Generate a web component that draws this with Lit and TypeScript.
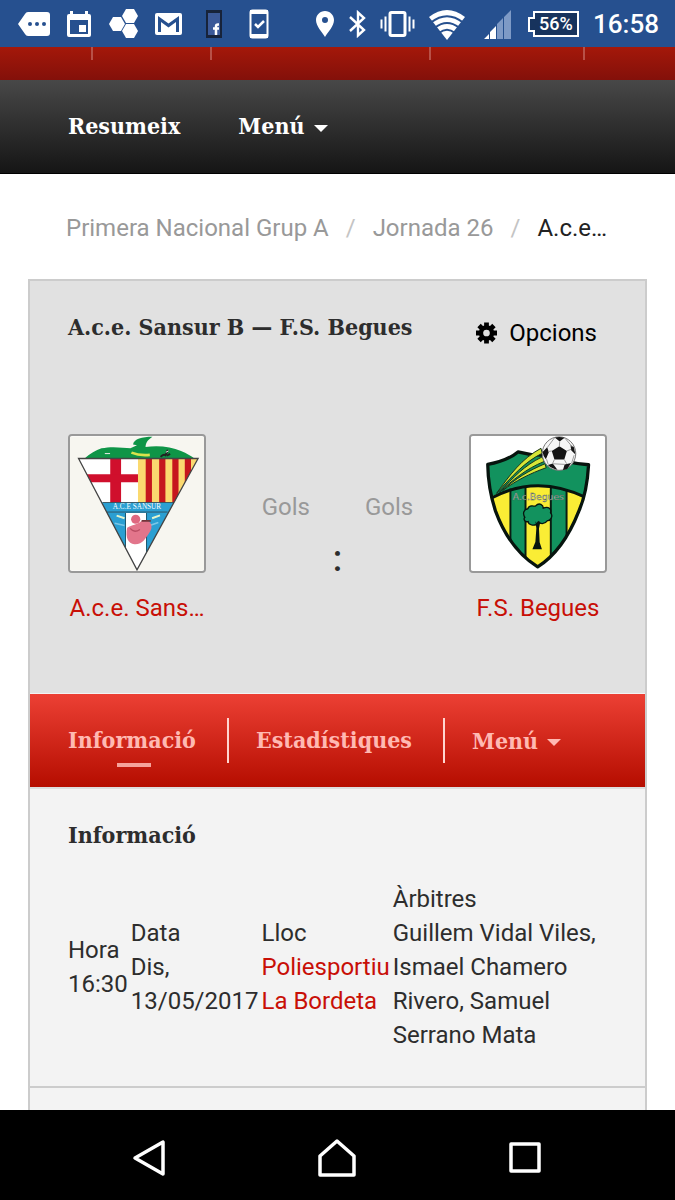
import { LitElement, html, css } from 'lit';
import { customElement, property } from 'lit/decorators.js';

const icons = {
  more: html`<svg width="32" height="26" viewBox="0 0 32 26">
    <path fill="#fff" d="M10 1h19q3 0 3 3v18q0 3-3 3H10q-2 0-3-2L0 13 7 3q1-2 3-2Z" />
    <g fill="#26508f"><circle cx="12" cy="13" r="2" /><circle cx="19" cy="13" r="2" /><circle cx="26" cy="13" r="2" /></g>
  </svg>`,
  calendar: html`<svg width="26" height="28" viewBox="0 0 26 28">
    <path fill="#fff" fill-rule="evenodd" d="M4 1h3v3h12V1h3v3h1q2 0 2 2v19q0 2-2 2H3q-2 0-2-2V6q0-2 2-2h1ZM4 10v14h18V10ZM13 15h7v7h-7Z" />
  </svg>`,
  hexagons: html`<svg width="30" height="30" viewBox="0 0 30 30">
    <g fill="#fff">
      <path d="M4 8h8l4 7-4 7H4l-4-7Z" />
      <path d="M17 0h8l4 7-4 7h-8l-4-7Z" />
      <path d="M17 15h8l4 7-4 7h-8l-4-7Z" />
    </g>
  </svg>`,
  mail: html`<svg width="27" height="22" viewBox="0 0 27 22">
    <rect width="27" height="22" rx="2" fill="#fff" />
    <path fill="#26508f" d="M3 19V3l10.500 7.500L24 3v16h-3V9l-7.500 5.500L6 9v10Z" />
  </svg>`,
  facebook: html`<svg width="16" height="28" viewBox="0 0 16 28">
    <rect width="16" height="28" fill="#17233a" />
    <rect x="2" y="3" width="12" height="22" fill="#3b5998" />
    <path fill="none" stroke="#fff" stroke-width="2.500" d="M13 14.500h-1q-2 0-2 2V25M7 18.500h6" />
  </svg>`,
  phoneCheck: html`<svg width="20" height="32" viewBox="0 0 20 32">
    <rect x="1.500" y="2.500" width="17" height="27" rx="2" fill="none" stroke="#fff" stroke-width="2" />
    <path fill="#fff" d="M1 2h18v4H1ZM1 26h18v4H1Z" />
    <path fill="none" stroke="#fff" stroke-width="2.500" d="m6 16 3 3 6-6" />
  </svg>`,
  location: html`<svg width="20" height="28" viewBox="0 0 20 28">
    <path fill="#fff" fill-rule="evenodd" d="M10 1c5 0 9 4 9 9 0 6-6 12-9 17C7 22 1 16 1 10c0-5 4-9 9-9Zm0 6a3 3 0 1 0 0 6 3 3 0 0 0 0-6Z" />
  </svg>`,
  bluetooth: html`<svg width="17" height="28" viewBox="0 0 17 28">
    <path fill="none" stroke="#fff" stroke-width="2.400" d="m1 7 14 13-6 5.500v-23l6 5.500L1 21" />
  </svg>`,
  vibrate: html`<svg width="35" height="28" viewBox="0 0 35 28">
    <rect x="10" y="2.500" width="15" height="23" rx="1.500" fill="none" stroke="#fff" stroke-width="3" />
    <path stroke="#fff" stroke-width="2" d="M1.500 9.500v9M5.500 6.500v15M29.500 6.500v15M33.500 9.500v9" />
  </svg>`,
  wifi: html`<svg width="40" height="32" viewBox="0 0 40 32">
    <path fill="#fff" d="M0 9Q18 -5 36 9L18 32Z" />
    <g fill="none" stroke="#26508f" stroke-width="2">
      <path d="M2 14.500Q18 2 34 14.500" />
      <path d="M6 19.500Q18 10.500 30 19.500" />
      <path d="M10 25Q18 18.500 26 25" />
    </g>
  </svg>`,
  signal: html`<svg width="31" height="32" viewBox="0 0 31 32">
    <path fill="#fff" d="m1 31 5-5v5ZM7 31v-7l6-6v13Z" />
    <path fill="#7e9ac6" d="M14 31V16l6-6v21ZM21 31V9l7-7v29Z" />
  </svg>`,
  battery: html`<svg width="51" height="28" viewBox="0 0 51 28">
    <path fill="#17335d" stroke="#fff" stroke-width="2" d="M6 2h44v24H6v-5H1V8h5Z" />
    <text x="11" y="20" fill="#fff" font-family="Roboto, sans-serif" font-size="18" font-weight="500">56%</text>
  </svg>`,
  gear: html`<svg width="21" height="22" viewBox="0 0 22 22">
    <g stroke="#000" stroke-width="5">
      <path d="M11 0v22M0 11h22M3.200 3.200l15.600 15.600M18.800 3.200 3.200 18.800" />
    </g>
    <circle cx="11" cy="11" r="8" />
    <circle cx="11" cy="11" r="3.500" fill="#e1e1e1" />
  </svg>`,
  back: html`<svg width="36" height="40" viewBox="0 0 36 40">
    <path fill="none" stroke="#fff" stroke-width="3.500" stroke-linejoin="round" d="M31 4v32L3 20Z" />
  </svg>`,
  home: html`<svg width="40" height="40" viewBox="0 0 40 40">
    <path fill="none" stroke="#fff" stroke-width="3.500" stroke-linejoin="round" d="M20 3 37 18v19H3V18Z" />
  </svg>`,
  recents: html`<svg width="36" height="40" viewBox="0 0 36 40">
    <rect x="4" y="6" width="28" height="27" fill="none" stroke="#fff" stroke-width="3.500" stroke-linejoin="round" />
  </svg>`,
};

const sansurCrest = html`<svg viewBox="42 32 408 408" role="img" aria-label="A.c.e. Sansur B">
  <rect x="42" y="32" width="408" height="408" fill="#f7f6f0" />
  <path fill="#0e9547" d="M86 99C104 84 120 74 138 68 168 61 204 66 226 68L246 59 234 56C236 40 262 33 293 33 282 42 273 47 272 64 310 58 350 63 380 76 398 84 410 90 421 99Z" />
  <path fill="none" stroke="#d9e24c" stroke-width="8" d="M229 81q24 10 56 7" />
  <path fill="none" stroke="#222" stroke-width="6" d="M318 94q8-10 15-5l7-16M337 90l10-5" />
  <path fill="none" stroke="#eee" stroke-width="3" d="M148 84h16M334 80l8-4" />
  <clipPath id="triangle"><path d="M68 99H432L246 438Z" /></clipPath>
  <g clip-path="url(#triangle)">
    <rect x="60" y="99" width="192" height="135" fill="#fff" />
    <path stroke="#d00f2c" stroke-width="33" d="M181 99v135" />
    <path stroke="#d00f2c" stroke-width="24" d="M60 159h190" />
    <rect x="249" y="99" width="185" height="135" fill="#fbd96f" />
    <path stroke="#c6161d" stroke-width="19" d="M282 99v135M323 99v135M363 99v135M401 99v135" />
    <rect x="60" y="232" width="380" height="210" fill="#2b9fd2" />
    <path fill="#fff" d="M211 265h64v180h-64Z" />
    <path fill="none" stroke="#1b566d" stroke-width="3" d="M211 265v150M275 265v150" />
    <path stroke="#e5f5cd" stroke-width="6" d="m184 273 24 8M292 281l24-9" />
    <path stroke="#7cc6e6" stroke-width="5" d="m178 296 30 7M287 302l24-8" />
  </g>
  <circle cx="242" cy="284" r="14" fill="#df6880" />
  <path fill="#e2758b" d="M216 310c15-10 30-9 44-21 23-10 40 14 24 35-11 17-22 38-46 36-19-2-28-19-22-50Z" />
  <path stroke="#71363b" stroke-width="5" d="M260 289h28" />
  <path fill="none" stroke="#b94d63" stroke-width="4" d="M225 312q12 15 30 3" />
  <path fill="none" stroke="#444" stroke-width="4" d="M68 99H432L246 438Z" />
  <path stroke="#333" stroke-width="2" d="M142 233h216M155 262h184" />
  <text x="246" y="254" fill="#fff" text-anchor="middle" font-family="Liberation Serif, serif" font-size="22">A.C.E SANSUR</text>
</svg>`;

const beguesCrest = html`<svg viewBox="44 32 408 408" role="img" aria-label="F.S. Begues">
  <rect x="44" y="32" width="408" height="408" fill="#fff" />
  <clipPath id="shield">
    <path d="M95 117Q155 106 187 79 230 91 275 88 330 112 402 118 397 205 372 260 325 380 247 429 162 376 119 260 96 190 95 117Z" />
  </clipPath>
  <g clip-path="url(#shield)">
    <rect x="80" y="70" width="340" height="370" fill="#12925e" />
    <path fill="#faed35" d="M100 218q40-20 63-25v170h-63ZM210 184q40-2 76 4v260h-76ZM334 193l70 25v140h-70Z" />
    <path fill="none" stroke="#091c12" stroke-width="6" d="M164 190v200M210 184v230M287 184v230M335 194v190" />
    <path fill="none" stroke="#07140e" stroke-width="9" d="M105 220Q244 144 397 219" />
  </g>
  <path fill="none" stroke="#07140e" stroke-width="10" stroke-linejoin="round" d="M95 117Q155 106 187 79 230 91 275 88 330 112 402 118 397 205 372 260 325 380 247 429 162 376 119 260 96 190 95 117Z" />
  <g fill="#d7e636" stroke="#14301e" stroke-width="3">
    <path d="M122 205C161 150 199 99 257 68l4 15C208 109 169 153 122 205Z" />
    <path d="M130 202c43-45 76-82 131-108l6 14c-55 22-95 56-137 94Z" />
    <path d="M140 197c37-36 82-62 129-82l4 12c-48 17-96 41-133 70Z" />
  </g>
  <circle cx="312" cy="84" r="51" fill="#f7f7f7" stroke="#777" stroke-width="3" />
  <g fill="#151515">
    <path d="m313 62 23 14-8 26h-30l-8-26ZM299 35q15-4 30 1l-15 11ZM262 79l14-14 5 15-9 21q-9-10-10-22ZM347 58l10 6 5 23-13-13ZM278 119l15-5 14 19q-17-2-29-14ZM329 117l20-4-12 18-13 3Z" />
  </g>
  <path fill="none" stroke="#999" stroke-width="3" d="m313 62 1-15M336 76l13-5M328 102l7 13M298 102l-6 13M290 76l-11 2M276 66l23-31M329 36l24 28M358 89l-8 25M274 101l5 16M293 115l37 2" />
  <text x="249" y="224" fill="#d3d9d2" stroke="#47574d" stroke-width="1" text-anchor="middle" font-family="DejaVu Sans, sans-serif" font-size="28">A.c.Begues</text>
  <path fill="#12925e" stroke="#07140e" stroke-width="4" d="M217 252c5-15 20-6 23-8 13-14 24-2 24 6 16-6 26 2 22 14 10 11-1 25-9 24-10 13-23 10-28 4-8 17-31 9-31-1-11 3-15-8-10-13-8-12-3-24 9-26Z" />
  <path fill="#07140e" d="m240 290 5 8 5-8 5 2-4 20 2 42 7 21h-29l9-22 3-42Z" />
</svg>`;

@customElement('match-team')
export class MatchTeam extends LitElement {
  @property()
  name = '';

  @property({ attribute: false })
  crest: unknown = null;

  render() {
    return html`
      <div class="crest">${this.crest}</div>
      <a class="name" href="#">${this.name}</a>
    `;
  }

  static styles = css`
    :host {
      display: flex;
      flex-direction: column;
      align-items: center;
      gap: 18px;
      width: 138px;
    }

    .crest {
      box-sizing: border-box;
      width: 138px;
      height: 139px;
      border: 2px solid #999;
      border-radius: 4px;
      background: #fff;
      overflow: hidden;
    }

    .crest svg {
      display: block;
      width: 100%;
      height: 100%;
    }

    .name {
      max-width: 100%;
      color: #c80f06;
      text-decoration: none;
      white-space: nowrap;
    }
  `;
}

@customElement('app-root')
export class AppRoot extends LitElement {
  private notifications = [
    icons.more,
    icons.calendar,
    icons.hexagons,
    icons.mail,
    icons.facebook,
    icons.phoneCheck,
  ];

  private details = [
    { label: 'Hora', value: '16:30' },
    { label: 'Data', value: 'Dis, 13/05/2017' },
    { label: 'Lloc', value: 'Poliesportiu La Bordeta', href: '#' },
    {
      label: 'Àrbitres',
      value: 'Guillem Vidal Viles, Ismael Chamero Rivero, Samuel Serrano Mata',
    },
  ];

  render() {
    return html`
      ${this.renderStatusBar()}
      <div class="strip"><i></i><i></i><i></i><i></i></div>
      <nav class="site-nav">
        <a href="#">Resumeix</a>
        <button>Menú <span class="caret"></span></button>
      </nav>
      <nav class="breadcrumb">
        <a href="#">Primera Nacional Grup A</a>
        <span class="slash">/</span>
        <a href="#">Jornada 26</a>
        <span class="slash">/</span>
        <span class="current">A.c.e…</span>
      </nav>
      <main class="card">
        <header class="match">
          <div class="match-head">
            <h1>A.c.e. Sansur B — F.S. Begues</h1>
            <button class="options">${icons.gear} Opcions</button>
          </div>
          <div class="versus">
            <match-team name="A.c.e. Sans…" .crest=${sansurCrest}></match-team>
            <div class="score">
              <div class="goals"><span>Gols</span><span>Gols</span></div>
              <div class="colon">:</div>
            </div>
            <match-team name="F.S. Begues" .crest=${beguesCrest}></match-team>
          </div>
        </header>
        <nav class="tabs">
          <a class="tab active" href="#">Informació</a>
          <a class="tab" href="#">Estadístiques</a>
          <button class="tab">Menú <span class="caret"></span></button>
        </nav>
        <section class="info">
          <h2>Informació</h2>
          ${this.renderDetails()}
        </section>
        <section class="next"></section>
      </main>
      <footer class="system-nav">
        <button aria-label="Back">${icons.back}</button>
        <button aria-label="Home">${icons.home}</button>
        <button aria-label="Recents">${icons.recents}</button>
      </footer>
    `;
  }

  private renderStatusBar = () => html`
    <div class="status">
      <div class="notifications">
        ${this.notifications.map(icon => html`<span>${icon}</span>`)}
      </div>
      <div class="system">
        ${icons.location} ${icons.bluetooth} ${icons.vibrate} ${icons.wifi}
        ${icons.signal} ${icons.battery}
        <time>16:58</time>
      </div>
    </div>
  `;

  private renderDetails = () => html`
    <table class="details">
      <tr>
        ${this.details.map(
          ({ label, value, href }) => html`
            <td>
              <div>${label}</div>
              ${href ? html`<a href=${href}>${value}</a>` : value}
            </td>
          `,
        )}
      </tr>
    </table>
  `;

  static styles = css`
    :host {
      display: flex;
      flex-direction: column;
      min-height: 100vh;
      background: #fff;
      color: #2d2d2d;
      font: 24px/34px Roboto, sans-serif;
    }

    a {
      color: inherit;
      text-decoration: none;
    }

    button {
      padding: 0;
      border: 0;
      background: none;
      color: inherit;
      font: inherit;
    }

    svg {
      display: block;
      flex: none;
    }

    h1,
    h2 {
      margin: 0;
    }

    h1,
    h2,
    .site-nav,
    .tabs {
      font: 700 23px/34px 'DejaVu Serif Condensed', 'DejaVu Serif', serif;
    }

    .caret {
      display: inline-block;
      margin-left: 2px;
      border: 7px solid transparent;
      border-top-color: currentColor;
      border-bottom: 0;
      vertical-align: middle;
    }

    .status {
      display: flex;
      justify-content: space-between;
      height: 47px;
      padding: 0 16px 0 11px;
      background: #26508f;
      color: #fff;
    }

    .notifications,
    .system {
      display: flex;
      align-items: center;
    }

    .notifications span {
      display: flex;
      justify-content: center;
      width: 45px;
    }

    .system {
      gap: 14px;
    }

    .system time {
      font-size: 26px;
      font-weight: 500;
    }

    .strip {
      display: grid;
      grid-template-columns: 93fr 119fr 219fr 154fr 90fr;
      height: 33px;
      background: linear-gradient(#a4180a, #83100a);
    }

    .strip i {
      height: 13px;
      border-right: 2px solid #b85147;
    }

    .site-nav {
      display: flex;
      gap: 58px;
      padding: 29px 38px 30px 68px;
      border-bottom: 1px solid #000;
      background: linear-gradient(#484848, #151515);
      color: #fff;
    }

    .breadcrumb {
      display: flex;
      gap: 17px;
      padding: 37px 28px 34px 66px;
      color: #999;
      white-space: nowrap;
    }

    .slash {
      color: #c4c4c4;
    }

    .current {
      color: #222;
    }

    .card {
      display: flex;
      flex: 1;
      flex-direction: column;
      margin: 0 28px;
      border: 2px solid #ccc;
      border-bottom: 0;
      background: #f3f3f3;
    }

    .match {
      padding: 29px 38px 68px;
      background: #e1e1e1;
    }

    .match-head {
      display: flex;
      align-items: flex-start;
      justify-content: space-between;
      padding-right: 10px;
    }

    .options {
      display: flex;
      align-items: center;
      gap: 12px;
      margin-top: 6px;
      color: #000;
    }

    .versus {
      display: flex;
      justify-content: space-between;
      margin-top: 84px;
    }

    .score {
      padding-top: 56px;
      text-align: center;
    }

    .goals {
      display: flex;
      gap: 55px;
      color: #999;
    }

    .colon {
      margin-top: 18px;
      font-size: 36px;
      font-weight: 500;
    }

    .tabs {
      display: flex;
      margin-top: 1px;
      padding: 24px 38px;
      background: linear-gradient(#ec4034, #b50d00);
      color: #ffb9b2;
    }

    .tab {
      position: relative;
      height: 45px;
      padding: 0 31px 0 27px;
      border-left: 2px solid #ffd5d0;
      line-height: 44px;
    }

    .tab:first-child {
      padding-left: 0;
      border-left: 0;
    }

    .active::after {
      position: absolute;
      bottom: -4px;
      left: 49px;
      width: 34px;
      height: 4px;
      background: #f6a39b;
      content: '';
    }

    .info {
      padding: 29px 38px 34px;
      border-top: 2px solid #ddd;
      border-bottom: 2px solid #ccc;
    }

    .details {
      width: 100%;
      margin-top: 30px;
      border-spacing: 0;
      color: #2d2d2d;
      font: inherit;
    }

    .details td {
      width: 1px;
      padding: 0 3px 0 0;
      vertical-align: middle;
    }

    .details td:last-child {
      width: auto;
    }

    .details a {
      color: #c80f06;
    }

    .next {
      flex: 1;
    }

    .system-nav {
      display: grid;
      grid-template-columns: repeat(3, 1fr);
      place-items: center;
      box-sizing: border-box;
      height: 90px;
      padding: 6px 56px 0;
      background: #000;
    }
  `;
}

declare global {
  interface HTMLElementTagNameMap {
    'app-root': AppRoot;
    'match-team': MatchTeam;
  }
}
